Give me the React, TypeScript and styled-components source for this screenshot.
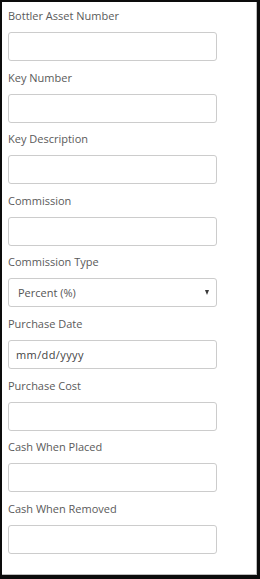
import React from "react";
import styled, { createGlobalStyle } from "styled-components";

const Global = createGlobalStyle`
  html, body { margin: 0; padding: 0; background: #ffffff; }
  * { box-sizing: border-box; }
`;

const Frame = styled.div`
  width: 260px;
  height: 579px;
  background: #ffffff;
  border-style: solid;
  border-color: #0c0c0c;
  border-width: 2px 3px 4px 2px;
  box-shadow: inset -1px -1px 0 #bdbdbd;
  padding: 6px 0 0 6px;
  font-family: "Open Sans", "DejaVu Sans", sans-serif;
`;

const Group = styled.div`
  display: flex;
  flex-direction: column;
  gap: 9px;
  margin-bottom: 8.6px;
`;

const Label = styled.label`
  font-size: 11px;
  line-height: 15px;
  color: #5a5a5a;
`;

const fieldBase = `
  width: 209px;
  height: 29px;
  border: 1px solid #cccccc;
  border-radius: 3px;
  background: #ffffff;
  font-family: "Open Sans", "DejaVu Sans", sans-serif;
  font-size: 11px;
  color: #444444;
  outline: none;
  margin: 0;
`;

const TextInput = styled.input<{ $indent?: number }>`
  ${fieldBase}
  padding: 0 0 0 ${(p) => p.$indent ?? 8}px;
  letter-spacing: ${(p) => (p.$indent ? "0.4px" : "0")};
  &::placeholder { color: #444444; opacity: 1; }
`;

const SelectWrap = styled.div`
  position: relative;
  width: 209px;
`;

const Select = styled.select`
  ${fieldBase}
  appearance: none;
  -webkit-appearance: none;
  padding: 0 0 0 9px;
  color: #555555;
`;

const Caret = styled.span`
  position: absolute;
  right: 8px;
  top: 12px;
  width: 0;
  height: 0;
  border-left: 2.5px solid transparent;
  border-right: 2.5px solid transparent;
  border-top: 5px solid #3a3a3a;
  pointer-events: none;
`;

const fields: { label: string; kind: "text" | "select" | "date" }[] = [
  { label: "Bottler Asset Number", kind: "text" },
  { label: "Key Number", kind: "text" },
  { label: "Key Description", kind: "text" },
  { label: "Commission", kind: "text" },
  { label: "Commission Type", kind: "select" },
  { label: "Purchase Date", kind: "date" },
  { label: "Purchase Cost", kind: "text" },
  { label: "Cash When Placed", kind: "text" },
  { label: "Cash When Removed", kind: "text" },
];

export default function App() {
  return (
    <>
      <Global />
      <Frame>
        {fields.map((f) => (
          <Group key={f.label}>
            <Label>{f.label}</Label>
            {f.kind === "select" ? (
              <SelectWrap>
                <Select defaultValue="percent">
                  <option value="percent">Percent (%)</option>
                  <option value="flat">Flat</option>
                </Select>
                <Caret />
              </SelectWrap>
            ) : f.kind === "date" ? (
              <TextInput type="text" placeholder="mm/dd/yyyy" $indent={7} />
            ) : (
              <TextInput type="text" />
            )}
          </Group>
        ))}
      </Frame>
    </>
  );
}
